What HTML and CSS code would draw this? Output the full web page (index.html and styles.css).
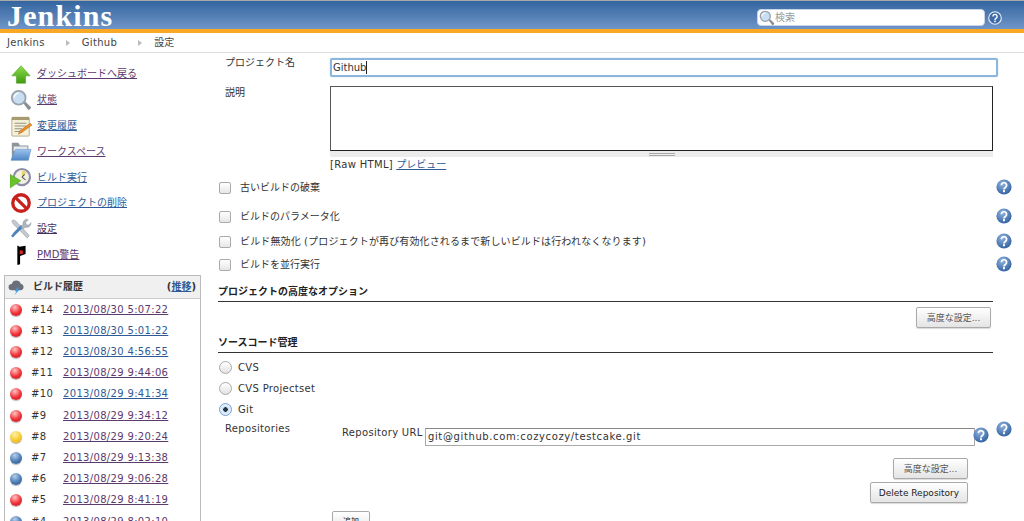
FILE: index.html
```html
<!DOCTYPE html>
<html lang="ja">
<head>
<meta charset="utf-8">
<title>Jenkins</title>
<link rel="stylesheet" href="styles.css">
</head>
<body>
<svg class="defs" width="0" height="0" aria-hidden="true">
  <defs>
    <radialGradient id="helpg" cx="40%" cy="30%" r="75%"><stop offset="0" stop-color="#8fb2dc"/><stop offset="1" stop-color="#2f5f9f"/></radialGradient>
    <linearGradient id="arrowg" x1="0" y1="0" x2="0" y2="1"><stop offset="0" stop-color="#8ee04a"/><stop offset="1" stop-color="#3f9a14"/></linearGradient>
    <linearGradient id="folderg" x1="0" y1="0" x2="0" y2="1"><stop offset="0" stop-color="#9cc3ee"/><stop offset="1" stop-color="#4f86c6"/></linearGradient>
    <symbol id="help" viewBox="0 0 16 16">
      <circle cx="8" cy="8" r="7.6" fill="url(#helpg)"/>
      <path d="M5.400 6.200a2.600 2.600 0 1 1 4 2.200c-.9.6-1.400 1-1.400 2" fill="none" stroke="#fff" stroke-width="1.800"/>
      <rect x="7" y="11.200" width="2" height="2" fill="#fff"/>
    </symbol>
    <symbol id="helpw" viewBox="0 0 16 16">
      <circle cx="8" cy="8" r="7.200" fill="#3f6ca8" stroke="#e6edf6" stroke-width="1.300"/>
      <path d="M5.600 6.200a2.400 2.400 0 1 1 3.800 2c-.9.6-1.400 1-1.400 2" fill="none" stroke="#fff" stroke-width="1.600"/>
      <rect x="7.100" y="11" width="1.800" height="1.800" fill="#fff"/>
    </symbol>
    <symbol id="lens" viewBox="0 0 24 24">
      <path d="M14 15l2-2 7 7-1 2-2 1z" fill="#8a8f96"/>
      <circle cx="9.5" cy="9.5" r="7.5" fill="#c9def3" stroke="#9aa3ad" stroke-width="2"/>
      <path d="M4.5 9.500a5 5 0 0 1 5-5" fill="none" stroke="#fff" stroke-width="1.600"/>
    </symbol>
  </defs>
</svg>

<header class="topbar">
  <div class="logo">Jenkins</div>
  <div class="search">
    <div class="searchbox">
      <svg class="searchicon"><use href="#lens"/></svg>
      <span class="searchtext">検索</span>
    </div>
    <svg class="tophelp"><use href="#helpw"/></svg>
  </div>
</header>

<nav class="crumbs">
  <span class="lat">Jenkins</span><i class="sep"></i>
  <span class="lat">Github</span><i class="sep"></i>
  <span>設定</span>
</nav>

<div class="page">
  <aside class="side">
    <ul class="tasks">
      <li><svg class="ticon" viewBox="0 0 24 24"><path d="M12 3L22 14H17V22H7V14H2Z" fill="url(#arrowg)" stroke="#4a9a20" stroke-width=".6"/></svg><a class="v" href="#">ダッシュボードへ戻る</a></li>
      <li><svg class="ticon"><use href="#lens"/></svg><a class="v" href="#">状態</a></li>
      <li><svg class="ticon" viewBox="0 0 24 24"><rect x="2" y="3" width="19" height="20" rx="1" fill="#f6f1d8" stroke="#b0a888"/><rect x="2" y="2" width="19" height="3.500" fill="#a89a70"/><path d="M5 9h13M5 12h13M5 15h8M5 18h6" stroke="#8a8a80"/><path d="M9 21l2-4 11-8 2 2-11 8z" fill="#e8912e" stroke="#a85f18" stroke-width=".5"/></svg><a href="#">変更履歴</a></li>
      <li><svg class="ticon" viewBox="0 0 24 24"><path d="M2 2h7l2 3h9v16H2z" fill="#8d939b"/><path d="M4 6h15v5H4z" fill="#e9ecef"/><path d="M6 9h17l-3 12H1z" fill="url(#folderg)" stroke="#5f8dc0" stroke-width=".5"/></svg><a class="v" href="#">ワークスペース</a></li>
      <li><svg class="ticon" viewBox="0 0 24 24"><circle cx="13" cy="11" r="10" fill="#8f8da8"/><circle cx="13" cy="11" r="7.600" fill="#f3f1e6"/><path d="M13 11V4a7 7 0 0 1 5 2z" fill="#e8d66a"/><path d="M13 11l3-3M13 11l4 3" stroke="#555" stroke-width="1.200"/><path d="M0 8l12 7-12 8z" fill="#6cc22c" stroke="#4a9a20" stroke-width=".5"/></svg><a href="#">ビルド実行</a></li>
      <li><svg class="ticon" viewBox="0 0 24 24"><circle cx="12" cy="12" r="9" fill="#fff" stroke="#c8201c" stroke-width="3.600"/><path d="M5.800 5.800l12.400 12.400" stroke="#c8201c" stroke-width="3.600"/></svg><a href="#">プロジェクトの削除</a></li>
      <li><svg class="ticon" viewBox="0 0 24 24"><path d="M3 2l3 1 15 16-2 3L4 7 2 4z" fill="#c4c9cf" stroke="#8a9099" stroke-width=".5"/><path d="M14 10l-8 8-3 3 -1.500-1.500 3-4 7.500-7.500z" fill="#4c83bd" stroke="#35639a" stroke-width=".4"/><path d="M20 2l-3 3 1 2 2 1 3-3c0 4-3 6-6 5l-3 2-2-2 2-3c0-4 3-7 6-5z" fill="#aeb5bd" stroke="#7f868e" stroke-width=".4"/></svg><a class="d" href="#">設定</a></li>
      <li><svg class="ticon" viewBox="0 0 24 24"><path d="M8 2h1l1 1 7-1v9l-6 2v9l-3 1z" fill="#000"/><rect x="10.500" y="7" width="3.500" height="4" fill="#d22"/></svg><a class="v" href="#">PMD警告</a></li>
    </ul>

    <section class="history">
      <div class="histhead">
        <svg class="cloud" viewBox="0 0 18 18"><path d="M4 12a3.400 3.400 0 0 1 0-6.800A5 5 0 0 1 13.500 5 3.600 3.600 0 0 1 14 12z" fill="#6b7078"/><path d="M10 9l-3 4h2l-2 4 5-5.500h-2l2-2.500z" fill="#3c9be8"/></svg>
        <b class="histtitle">ビルド履歴</b>
        <b class="trend">(<a href="#">推移</a>)</b>
      </div>
      <div class="row"><i class="ball red"></i><span class="num">#14</span><a class="v" href="#">2013/08/30 5:07:22</a></div>
      <div class="row"><i class="ball red"></i><span class="num">#13</span><a href="#">2013/08/30 5:01:22</a></div>
      <div class="row"><i class="ball red"></i><span class="num">#12</span><a href="#">2013/08/30 4:56:55</a></div>
      <div class="row"><i class="ball red"></i><span class="num">#11</span><a class="v" href="#">2013/08/29 9:44:06</a></div>
      <div class="row"><i class="ball red"></i><span class="num">#10</span><a href="#">2013/08/29 9:41:34</a></div>
      <div class="row"><i class="ball red"></i><span class="num">#9</span><a class="v" href="#">2013/08/29 9:34:12</a></div>
      <div class="row"><i class="ball yellow"></i><span class="num">#8</span><a class="v" href="#">2013/08/29 9:20:24</a></div>
      <div class="row"><i class="ball blue"></i><span class="num">#7</span><a class="v" href="#">2013/08/29 9:13:38</a></div>
      <div class="row"><i class="ball blue"></i><span class="num">#6</span><a class="v" href="#">2013/08/29 9:06:28</a></div>
      <div class="row"><i class="ball red"></i><span class="num">#5</span><a class="v" href="#">2013/08/29 8:41:19</a></div>
      <div class="row"><i class="ball blue"></i><span class="num">#4</span><a class="v" href="#">2013/08/29 8:02:10</a></div>
    </section>
  </aside>

  <main class="form">
    <div class="field namefield">
      <label class="flabel">プロジェクト名</label>
      <div class="nameinput">Github<i class="caret"></i></div>
    </div>
    <div class="field descfield">
      <label class="flabel">説明</label>
      <div class="fbody">
        <div class="textarea"></div>
        <div class="grip"><i></i></div>
        <div class="rawline"><span class="lat">[Raw HTML]</span> <a href="#">プレビュー</a></div>
      </div>
    </div>

    <div class="check c1"><i class="box"></i><span class="cname">古いビルドの破棄</span><svg class="hicon"><use href="#help"/></svg></div>
    <div class="check c2"><i class="box"></i><span class="cname">ビルドのパラメータ化</span><svg class="hicon"><use href="#help"/></svg></div>
    <div class="check c3"><i class="box"></i><span class="cname wide">ビルド無効化 (プロジェクトが再び有効化されるまで新しいビルドは行われなくなります)</span><svg class="hicon"><use href="#help"/></svg></div>
    <div class="check c4"><i class="box"></i><span class="cname">ビルドを並行実行</span><svg class="hicon"><use href="#help"/></svg></div>

    <h3 class="section s1">プロジェクトの高度なオプション</h3>
    <div class="btnrow"><button class="btn dim">高度な設定...</button></div>

    <h3 class="section s2">ソースコード管理</h3>
    <div class="radio r1"><i class="rad"></i><span class="lat">CVS</span></div>
    <div class="radio"><i class="rad"></i><span class="lat">CVS Projectset</span></div>
    <div class="radio"><i class="rad on"></i><span class="lat">Git</span></div>

    <div class="repos">
      <span class="reposlabel lat">Repositories</span>
      <div class="repobody">
        <div class="urlrow">
          <span class="urllabel lat">Repository URL</span>
          <div class="urlinput">git@github.com:cozycozy/testcake.git</div>
          <svg class="urlhelp"><use href="#help"/></svg>
        </div>
        <div class="repobtns">
          <button class="btn dim">高度な設定...</button>
          <button class="btn del">Delete Repository</button>
        </div>
        <button class="btn add">追加</button>
      </div>
      <svg class="hicon outerhelp"><use href="#help"/></svg>
    </div>
  </main>
</div>
</body>
</html>
```
FILE: styles.css
```css
* { box-sizing: border-box; }
html, body { margin: 0; height: 521px; overflow: hidden; }
body { font: 10px/14px "DejaVu Sans", "Noto Sans CJK JP", sans-serif; color: #333; background: #fff; }
.defs { position: absolute; }
a { color: #2f5a96; text-decoration: underline; }
a.v { color: #5c3a6e; }
a.d { color: #4a2f58; }
.lat { letter-spacing: .32px; }

.topbar { height: 33px; display: flex; justify-content: space-between; align-items: flex-start;
  background: linear-gradient(#34659f, #6f95c8 28px); border-top: 1px solid #a9a9a9; border-bottom: 4px solid #f9a825; }
.logo { font: bold 30px/28px "Liberation Serif", serif; letter-spacing: 1.150px; color: #fff; margin: 1px 0 0 7px; }
.search { display: flex; align-items: center; margin: 8px 22px 0 0; }
.searchbox { width: 228px; height: 17px; background: #fff; border-radius: 4px; border: 1px solid #c5d3e4; display: flex; align-items: center; }
.searchicon { width: 16px; height: 16px; margin-left: 1px; flex: none; }
.searchtext { color: #999; margin-left: 0; }
.tophelp { width: 14px; height: 14px; margin-left: 3px; flex: none; }

.crumbs { height: 20px; display: flex; align-items: center; padding: 1px 0 0 7px; border-bottom: 1px solid #ddd; color: #444; }
.sep { width: 0; height: 0; border-left: 4px solid #bbb; border-top: 3px solid transparent; border-bottom: 3px solid transparent; margin: 0 12px 0 21px; }

.page { display: flex; }
.side { width: 218px; flex: none; padding: 8px 0 0 4px; }
.tasks { list-style: none; margin: 0; padding: 0; }
.tasks li { height: 25.900px; display: flex; align-items: center; padding-left: 6px; }
.ticon { width: 22px; height: 22px; margin-right: 5px; flex: none; }

.history { width: 197px; margin-top: 7px; border: 1px solid #bbb; }
.histhead { height: 23px; background: #f0f0f0; border-bottom: 1px solid #ccc; display: flex; align-items: center; padding: 0 4px 0 3px; }
.cloud { width: 17px; height: 17px; flex: none; }
.histtitle { margin-left: 8px; flex: 1; font-weight: bold; }
.trend { font-weight: bold; }
.row { height: 21.200px; display: flex; align-items: center; padding-left: 5px; letter-spacing: .33px; }
.num { width: 32px; margin-left: 9px; color: #333; }
.ball { width: 12px; height: 12px; border-radius: 50%; flex: none; box-shadow: 0 1px 1px rgba(0,0,0,.3); }
.red { background: radial-gradient(circle at 40% 28%, #ffc4c4, #f02f35 55%, #b81c22); }
.yellow { background: radial-gradient(circle at 40% 28%, #fff0a8, #f8c92e 55%, #d89a14); }
.blue { background: radial-gradient(circle at 40% 28%, #b6cfe8, #4a7ab5 55%, #2b5386); }

.form { flex: 1; min-width: 0; padding-top: 3px; }
.field { display: flex; }
.flabel { width: 112px; padding-left: 7px; flex: none; }
.nameinput { width: 668px; height: 19px; margin-top: 2px; border: 2px solid #8db6de; border-radius: 2px; line-height: 15px; padding-left: 1px; box-shadow: 0 0 1px #6fa0d0; color: #333; display: flex; align-items: center; }
.caret { width: 1px; height: 13px; background: #222; }
.descfield { margin-top: 9px; }
.fbody { width: 663px; }
.textarea { height: 65px; border: 1px solid #222; border-top-color: #555; border-left-color: #555; background: #fff; }
.grip { height: 6px; background: #ececec; display: flex; justify-content: center; align-items: center; }
.grip i { width: 26px; height: 3px; border-top: 1px solid #aaa; border-bottom: 1px solid #aaa; }
.rawline { margin-top: 1px; line-height: 14px; }

.check { height: 23px; display: flex; align-items: center; }
.c1 { margin-top: 4px; }
.c2 { margin-top: 6px; }
.c3 { margin-top: 2px; }
.c4 { margin-top: 0; }
.box { width: 12px; height: 12px; border: 1px solid #aaa; border-radius: 2px; background: linear-gradient(#fff, #e6e6e6); margin: 0 9px 0 1px; flex: none; }
.cname { flex: 1; }
.wide { letter-spacing: .13px; }
.hicon { width: 16px; height: 16px; margin: 0 12px 2px 0; flex: none; }

.section { width: 775px; margin: 0; font-size: 10px; line-height: 14px; font-weight: bold; color: #222; border-bottom: 1px solid #333; }
.s1 { margin-top: 9px; padding-bottom: 2px; }
.s2 { margin-top: 8px; padding-bottom: 2px; }
.btnrow { width: 773px; display: flex; justify-content: flex-end; margin-top: 5px; }
.btn { font: 9px/14px "DejaVu Sans", "Noto Sans CJK JP", sans-serif; color: #222; height: 21px; width: 75px; padding: 0; background: linear-gradient(#fff, #e4e4e4); border: 1px solid #aaa; border-radius: 2px; box-shadow: 0 1px 1px rgba(0,0,0,.15); }
.dim { color: #555; }
.del { width: 98px; }

.radio { height: 21px; display: flex; align-items: center; }
.r1 { margin-top: 4px; }
.rad { width: 13px; height: 13px; border: 1px solid #aaa; border-radius: 50%; background: linear-gradient(#fff, #e2e2e2); margin: 0 6px 0 1px; flex: none; }
.rad.on { border-color: #6f9fd4; background: radial-gradient(circle, #234 0 2px, #cfe0f4 2.500px, #fff); }

.repos { display: flex; margin-top: 2px; }
.reposlabel { width: 124px; padding-left: 7px; flex: none; }
.repobody { width: 650px; margin-top: -1px; }
.urlrow { display: flex; align-items: flex-start; }
.urllabel { margin-top: 5px; width: 83px; flex: none; }
.urlinput { width: 550px; height: 18px; margin-top: 7px; border: 1px solid #aaa; border-top-color: #888; line-height: 16px; padding-left: 2px; letter-spacing: .62px; color: #333; flex: none; }
.urlhelp { width: 16px; height: 16px; margin: 6px 0 0 -2px; flex: none; }
.repobtns { width: 626px; display: flex; flex-direction: column; align-items: flex-end; gap: 3px; margin-top: 12px; }
.add { display: block; width: 38px; margin: 8px 0 0 -10px; font-size: 8px; }
.outerhelp { margin: -1px 0 0 4px; }
```
